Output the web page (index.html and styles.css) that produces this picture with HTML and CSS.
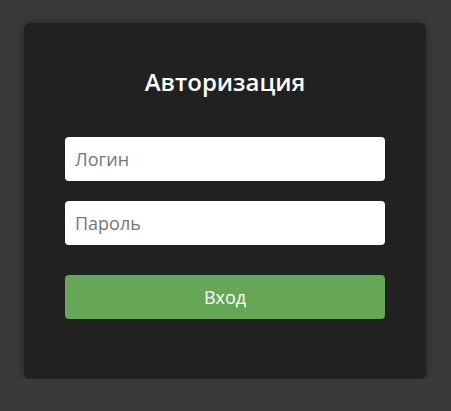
FILE: index.html
```html
<!DOCTYPE html>
<html lang="ru">
<head>
<meta charset="utf-8">
<link rel="stylesheet" href="styles.css">
</head>
<body>
<div class="page">
  <form class="card">
    <h2 class="title">Авторизация</h2>
    <input class="field" type="text" placeholder="Логин">
    <input class="field" type="password" placeholder="Пароль">
    <button class="btn" type="button">Вход</button>
  </form>
</div>
</body>
</html>
```
FILE: styles.css
```css
html, body {
  margin: 0;
  padding: 0;
  background: #3a3a3a;
  font-family: "Open Sans", "Noto Sans", sans-serif;
}
.page {
  padding: 23px 0 0 24px;
}
.card {
  width: 402px;
  box-sizing: border-box;
  background: #212121;
  border-radius: 6px;
  box-shadow: 0 0 8px rgba(0, 0, 0, 0.35);
  padding: 44px 41px 60px;
  display: flex;
  flex-direction: column;
}
.title {
  margin: 0 0 40px;
  font-size: 24px;
  line-height: 30px;
  font-weight: 600;
  color: #ffffff;
  text-align: center;
}
.field {
  height: 44px;
  box-sizing: border-box;
  border: none;
  border-radius: 4px;
  background: #ffffff;
  padding: 0 10px;
  font-family: inherit;
  font-size: 18px;
  color: #333;
  outline: none;
  margin: 0 0 20px;
}
.field::placeholder {
  color: #777777;
}
.btn {
  margin-top: 10px;
  height: 44px;
  border: none;
  border-radius: 4px;
  background: #65a756;
  color: #ffffff;
  font-family: inherit;
  font-size: 18px;
  cursor: pointer;
}
```
